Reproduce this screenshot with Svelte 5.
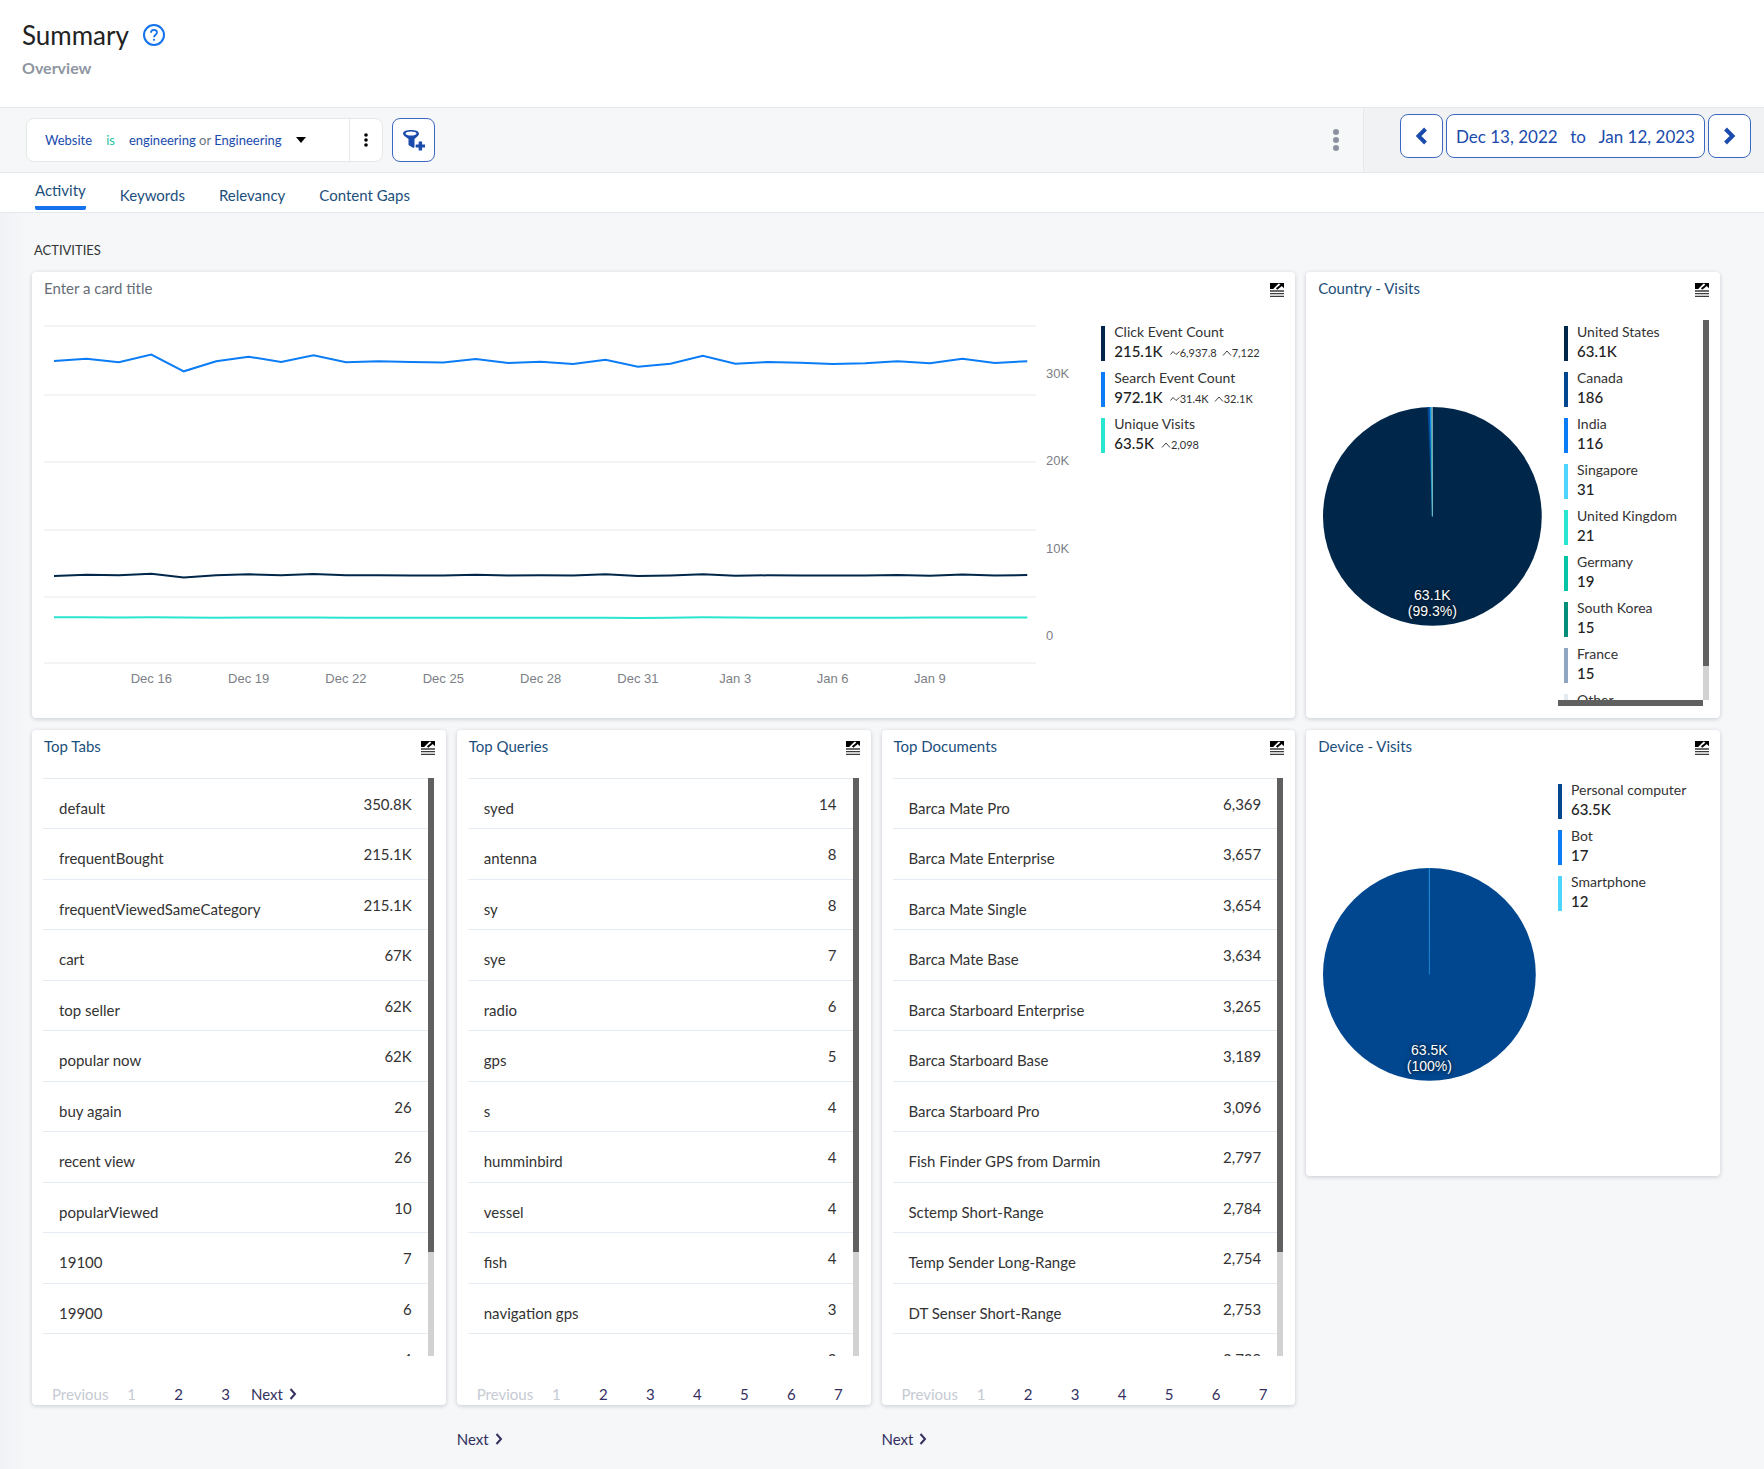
<script lang="ts">
	type LegendItem = { label: string; value: string; color: string; count: number; avg?: string; peak?: string };
	type ListCard = { title: string; rows: [string, string][]; pages: number[]; nextInside: boolean };

	const tabs = ['Activity', 'Keywords', 'Relevancy', 'Content Gaps'];
	let activeTab = $state('Activity');
	let cardTitle = $state('');

	const metrics: LegendItem[] = [
		{ label: 'Click Event Count', value: '215.1K', color: '#00274a', count: 0, avg: '6,937.8', peak: '7,122' },
		{ label: 'Search Event Count', value: '972.1K', color: '#0a7cf5', count: 0, avg: '31.4K', peak: '32.1K' },
		{ label: 'Unique Visits', value: '63.5K', color: '#28e6cf', count: 0, peak: '2,098' }
	];

	const countries: LegendItem[] = [
		{ label: 'United States', value: '63.1K', color: '#00274a', count: 63100 },
		{ label: 'Canada', value: '186', color: '#00478f', count: 186 },
		{ label: 'India', value: '116', color: '#0a7cf5', count: 116 },
		{ label: 'Singapore', value: '31', color: '#4dd5ff', count: 31 },
		{ label: 'United Kingdom', value: '21', color: '#28e6cf', count: 21 },
		{ label: 'Germany', value: '19', color: '#05c3a5', count: 19 },
		{ label: 'South Korea', value: '15', color: '#028e79', count: 15 },
		{ label: 'France', value: '15', color: '#90a5c2', count: 15 },
		{ label: 'Other', value: '42', color: '#e2e9ef', count: 42 }
	];

	const devices: LegendItem[] = [
		{ label: 'Personal computer', value: '63.5K', color: '#00478f', count: 63500 },
		{ label: 'Bot', value: '17', color: '#0a7cf5', count: 17 },
		{ label: 'Smartphone', value: '12', color: '#4dd5ff', count: 12 }
	];

	const lists: ListCard[] = [
		{
			title: 'Top Tabs',
			rows: [
				['default', '350.8K'],
				['frequentBought', '215.1K'],
				['frequentViewedSameCategory', '215.1K'],
				['cart', '67K'],
				['top seller', '62K'],
				['popular now', '62K'],
				['buy again', '26'],
				['recent view', '26'],
				['popularViewed', '10'],
				['19100', '7'],
				['19900', '6'],
				['', '4']
			],
			pages: [2, 3],
			nextInside: true
		},
		{
			title: 'Top Queries',
			rows: [
				['syed', '14'],
				['antenna', '8'],
				['sy', '8'],
				['sye', '7'],
				['radio', '6'],
				['gps', '5'],
				['s', '4'],
				['humminbird', '4'],
				['vessel', '4'],
				['fish', '4'],
				['navigation gps', '3'],
				['', '3']
			],
			pages: [2, 3, 4, 5, 6, 7],
			nextInside: false
		},
		{
			title: 'Top Documents',
			rows: [
				['Barca Mate Pro', '6,369'],
				['Barca Mate Enterprise', '3,657'],
				['Barca Mate Single', '3,654'],
				['Barca Mate Base', '3,634'],
				['Barca Starboard Enterprise', '3,265'],
				['Barca Starboard Base', '3,189'],
				['Barca Starboard Pro', '3,096'],
				['Fish Finder GPS from Darmin', '2,797'],
				['Sctemp Short-Range', '2,784'],
				['Temp Sender Long-Range', '2,754'],
				['DT Senser Short-Range', '2,753'],
				['', '2,739']
			],
			pages: [2, 3, 4, 5, 6, 7],
			nextInside: false
		}
	];

	// Daily values, Dec 13 to Jan 12
	const search = [
		31500, 31760, 31350, 32230, 30320, 31470, 31990, 31390, 32150, 31350, 31470, 31390, 31320, 31730, 31270, 31420,
		31160, 31650, 30850, 31190, 32110, 31190, 31390, 31310, 31160, 31240, 31470, 31240, 31760, 31270, 31470
	];
	const clicks = [
		6870, 7020, 6950, 7130, 6690, 6970, 7060, 6950, 7090, 6950, 6970, 6940, 6930, 7020, 6940, 6950, 6930, 7060, 6870,
		6930, 7060, 6910, 6950, 6940, 6920, 6940, 7000, 6910, 7050, 6940, 6980
	];
	const visits = [
		2140, 2140, 2130, 2140, 2110, 2090, 2130, 2110, 2130, 2100, 2100, 2090, 2090, 2100, 2090, 2090, 2090, 2100, 2070,
		2090, 2140, 2110, 2100, 2100, 2090, 2080, 2100, 2110, 2120, 2110, 2110
	];

	const PLOT_W = 993;
	const PLOT_H = 371;
	const ZERO_Y = 316;
	const series = [
		{ color: '#28e6cf', values: visits },
		{ color: '#00274a', values: clicks },
		{ color: '#0a7cf5', values: search }
	];
	const gridLines = [6, 75, 142, 210, 277, 343];
	const dayLabels = ['Dec 16', 'Dec 19', 'Dec 22', 'Dec 25', 'Dec 28', 'Dec 31', 'Jan 3', 'Jan 6', 'Jan 9'];
	const yTicks = [
		{ label: '30K', value: 30000 },
		{ label: '20K', value: 20000 },
		{ label: '10K', value: 10000 },
		{ label: '0', value: 0 }
	];

	const dayX = (i: number) => 10 + (i * (PLOT_W - 19)) / 30;
	const valueY = (v: number) => ZERO_Y - v * 0.00873;
	const toPoints = (values: number[]) => values.map((v, i) => `${dayX(i)},${valueY(v)}`).join(' ');

	function slices(items: LegendItem[], r: number) {
		const total = items.reduce((sum, item) => sum + item.count, 0);
		let angle = (items[0].count / total) * Math.PI * 2;
		return items.slice(1).map((item) => {
			const start = angle;
			angle += (item.count / total) * Math.PI * 2;
			const point = (a: number) => `${r + r * Math.sin(a)},${r - r * Math.cos(a)}`;
			return { color: item.color, d: `M${r},${r} L${point(start)} A${r},${r} 0 0 1 ${point(angle)} Z` };
		});
	}
</script>

{#snippet expandButton(name: string)}
	<button class="icon-btn" aria-label="Explore {name}">
		<svg width="14" height="14" viewBox="0 0 14 14">
			<path d="M0 0h9v6H0z" fill="#000" />
			<path d="M4.800 7.200 11 1" stroke="#fff" stroke-width="4" />
			<path d="M6.600 6 11.500 2" stroke="#000" stroke-width="2" />
			<path d="M8.500 0H14v5.200z" fill="#000" />
			<path d="M0 8h14M0 10.700h14M0 13.400h14" stroke="#3c3c3c" stroke-width="1.300" />
		</svg>
	</button>
{/snippet}

{#snippet legend(items: LegendItem[])}
	<ul class="legend">
		{#each items as item}
			<li style:border-color={item.color}>
				<span class="legend-label">{item.label}</span>
				<span class="legend-line">
					<span class="legend-value">{item.value}</span>
					{#if item.avg}
						<span class="stat">
							<svg width="10" height="6" viewBox="0 0 10 6"><path d="M0.500 4.500 3 1.500 6 4.500 9.500 1.500" /></svg>{item.avg}
						</span>
					{/if}
					{#if item.peak}
						<span class="stat">
							<svg width="10" height="6" viewBox="0 0 10 6"><path d="M1 5.500 5 1 9 5.500" /></svg>{item.peak}
						</span>
					{/if}
				</span>
			</li>
		{/each}
	</ul>
{/snippet}

{#snippet pie(items: LegendItem[], r: number, value: string, percent: string)}
	<svg class="pie" viewBox="0 0 {r * 2} {r * 2}">
		<circle cx={r} cy={r} {r} fill={items[0].color} />
		{#each slices(items, r) as slice}
			<path d={slice.d} fill={slice.color} stroke={slice.color} stroke-width="0.200" />
		{/each}
		<text x={r} y={r * 2 - 26}>{value}</text>
		<text x={r} y={r * 2 - 10}>{percent}</text>
	</svg>
{/snippet}

{#snippet nextButton()}
	<button class="next">
		Next
		<svg width="8" height="12" viewBox="0 0 8 12"><path d="M1.500 1 6 6 1.500 11" /></svg>
	</button>
{/snippet}

<div class="page">
	<header class="page-header">
		<div class="title-row">
			<h1>Summary</h1>
			<button class="icon-btn" aria-label="Help">
				<svg width="22" height="22" viewBox="0 0 22 22" fill="none" stroke="#1372ec" stroke-width="2">
					<circle cx="11" cy="11" r="10" />
					<path d="M8 8.800C8 6.800 9.300 5.800 11 5.800s3 1.100 3 2.700c0 2.200-3 2.300-3 4.700" stroke-width="1.800" />
					<circle cx="11" cy="15.800" r="1.100" fill="#1372ec" stroke="none" />
				</svg>
			</button>
		</div>
		<p>Overview</p>
	</header>

	<div class="toolbar">
		<div class="filter">
			<button class="filter-main">
				<span>Website</span>
				<span class="operator">is</span>
				<span>engineering <i>or</i> Engineering</span>
				<svg width="10" height="6" viewBox="0 0 10 6"><path d="M0 0h10L5 6z" /></svg>
			</button>
			<button class="filter-menu" aria-label="Filter options">
				<svg width="4" height="14" viewBox="0 0 4 14">
					<circle cx="2" cy="2" r="1.800" /><circle cx="2" cy="7" r="1.800" /><circle cx="2" cy="12" r="1.800" />
				</svg>
			</button>
		</div>
		<button class="outlined square" aria-label="Add filter">
			<svg width="22" height="22" viewBox="0 0 22 22" fill="#1a4bad">
				<path d="M0 4.500C0 2 4 1 8 1s8 1 8 3.500c0 1.500-1.500 3-4.500 5.500v7.500c0 1.500-1 1.500-2 1L5.500 16v-6C2 7.500 0 6 0 4.500z" />
				<ellipse cx="8" cy="4.500" rx="5.500" ry="2" fill="#fff" />
				<path d="M15.700 12.500h3.400v3h3v3h-3v3h-3.400v-3h-3v-3h3z" />
			</svg>
		</button>
		<button class="icon-btn more" aria-label="More actions">
			<svg width="6" height="22" viewBox="0 0 6 22" fill="#8a929e">
				<circle cx="3" cy="3" r="3" /><circle cx="3" cy="11" r="3" /><circle cx="3" cy="19" r="3" />
			</svg>
		</button>
		<div class="period">
			<button class="outlined square" aria-label="Previous period">
				<svg width="12" height="18" viewBox="0 0 12 18" fill="none" stroke="#1a4bad" stroke-width="4">
					<path d="M9.500 2l-7 7 7 7" />
				</svg>
			</button>
			<button class="outlined range"><span>Dec 13, 2022</span><span>to</span><span>Jan 12, 2023</span></button>
			<button class="outlined square" aria-label="Next period">
				<svg width="12" height="18" viewBox="0 0 12 18" fill="none" stroke="#1a4bad" stroke-width="4">
					<path d="M1.500 2l7 7-7 7" />
				</svg>
			</button>
		</div>
	</div>

	<nav class="tabs">
		{#each tabs as tab}
			<button class:active={activeTab === tab} onclick={() => (activeTab = tab)}>{tab}</button>
		{/each}
	</nav>

	<main>
		<h2>ACTIVITIES</h2>
		<div class="grid">
			<section class="card wide">
				<div class="card-header">
					<input type="text" placeholder="Enter a card title" aria-label="Card title" bind:value={cardTitle} />
					{@render expandButton('chart')}
				</div>
				<div class="chart-body">
					<svg class="plot" height={PLOT_H}>
						<svg width="100%" height={PLOT_H} viewBox="0 0 {PLOT_W} {PLOT_H}" preserveAspectRatio="none">
							{#each gridLines as y}
								<line class="grid-line" x1="0" x2={PLOT_W} y1={y} y2={y} />
							{/each}
							{#each series as line}
								<polyline points={toPoints(line.values)} stroke={line.color} />
							{/each}
						</svg>
						{#each dayLabels as day, i}
							<text x="{(dayX(3 + i * 3) / PLOT_W) * 100}%" y="363" text-anchor="middle">{day}</text>
						{/each}
					</svg>
					<svg class="y-axis" width="44" height={PLOT_H}>
						{#each yTicks as tick}
							<text x="0" y={valueY(tick.value) + 4}>{tick.label}</text>
						{/each}
					</svg>
					<div class="chart-legend">{@render legend(metrics)}</div>
				</div>
			</section>

			<section class="card">
				<div class="card-header">
					<h3>Country - Visits</h3>
					{@render expandButton('Country - Visits')}
				</div>
				<div class="pie-body">
					<div class="pie-area">{@render pie(countries, 109, '63.1K', '(99.3%)')}</div>
					<div class="scroller">
						<div class="scroll-view">{@render legend(countries)}</div>
						<div class="track"><div class="thumb" style:height="91%"></div></div>
						<div class="thumb-x"></div>
					</div>
				</div>
			</section>

			{#each lists as list}
				<div class="list-col">
					<section class="card">
						<div class="card-header">
							<h3>{list.title}</h3>
							{@render expandButton(list.title)}
						</div>
						<div class="list-body">
							<div class="list-view">
								<table>
									<tbody>
										{#each list.rows as [name, value]}
											<tr>
												<th scope="row">{name}</th>
												<td>{value}</td>
											</tr>
										{/each}
									</tbody>
								</table>
							</div>
							<div class="track"><div class="thumb" style:height="82%"></div></div>
						</div>
						<div class="pager">
							<button class="prev" disabled>Previous</button>
							<button class="num" disabled>1</button>
							{#each list.pages as page}
								<button class="num">{page}</button>
							{/each}
							{#if list.nextInside}{@render nextButton()}{/if}
						</div>
					</section>
					{#if !list.nextInside}{@render nextButton()}{/if}
				</div>
			{/each}

			<section class="card device">
				<div class="card-header">
					<h3>Device - Visits</h3>
					{@render expandButton('Device - Visits')}
				</div>
				<div class="pie-body">
					<div class="pie-area">{@render pie(devices, 106, '63.5K', '(100%)')}</div>
					<div class="device-legend">{@render legend(devices)}</div>
				</div>
			</section>
		</div>
	</main>
</div>

<style>
	:global(body) {
		background: #f5f7f9;
	}

	.page {
		font-family: Lato, 'Open Sans', sans-serif;
		color: #333;
		min-height: 100vh;
	}

	button {
		font: inherit;
		color: inherit;
		background: none;
		border: none;
		padding: 0;
		cursor: pointer;
	}

	button svg {
		display: block;
	}

	h1,
	h2,
	h3,
	p,
	ul {
		margin: 0;
		padding: 0;
		font-weight: 400;
	}

	.page-header {
		background: #fff;
		border-bottom: 1px solid #e5e8ec;
		padding: 19px 22px 29px;
	}

	.title-row {
		display: flex;
		align-items: center;
		gap: 14px;
	}

	h1 {
		font-size: 26px;
		line-height: 32px;
		color: #222;
	}

	.page-header p {
		font-size: 16px;
		font-weight: 700;
		line-height: 20px;
		margin-top: 7px;
		color: #8f96a1;
	}

	.toolbar {
		display: flex;
		align-items: stretch;
		height: 64px;
		border-bottom: 1px solid #e5e8ec;
		padding-left: 26px;
	}

	.filter {
		display: flex;
		width: 355px;
		height: 42px;
		margin: 10px 9px 0 0;
		background: #fff;
		border: 1px solid #e5e8e8;
		border-radius: 8px;
		font-size: 13px;
		color: #1a4bad;
	}

	.filter-main {
		flex: 1;
		display: flex;
		align-items: center;
		gap: 14px;
		padding-left: 18px;
	}

	.filter-main i {
		font-style: normal;
		color: #6b7480;
	}

	.filter-main .operator {
		color: #1cc4a4;
	}

	.filter-menu {
		width: 33px;
		display: flex;
		align-items: center;
		justify-content: center;
		border-left: 1px solid #e5e8e8;
	}

	.filter-main svg,
	.filter-menu svg {
		fill: #000;
	}

	.outlined {
		display: flex;
		align-items: center;
		justify-content: center;
		box-sizing: border-box;
		height: 44px;
		background: #fff;
		border: 1px solid #3b68c0;
		border-radius: 8px;
		color: #1a4bad;
	}

	.square {
		width: 43px;
	}

	.toolbar > .outlined {
		margin-top: 10px;
	}

	.icon-btn {
		display: flex;
		align-items: center;
	}

	.more {
		margin-left: auto;
		padding: 0 24px;
	}

	.period {
		display: flex;
		gap: 3px;
		background: #f1f2f4;
		border-left: 1px solid #e5e8ec;
		padding: 6px 13px 0 36px;
	}

	.range {
		width: 259px;
		justify-content: space-between;
		padding: 0 9px;
		font-size: 17px;
	}

	.tabs {
		display: flex;
		gap: 34px;
		height: 39px;
		padding-left: 35px;
		background: #fff;
		border-bottom: 1px solid #e5e8ec;
		font-size: 15px;
		color: #1c4f7c;
	}

	.tabs button {
		height: 37px;
		padding-top: 11px;
		line-height: 20px;
		box-sizing: border-box;
		border-bottom: 4px solid transparent;
	}

	.tabs .active {
		padding-top: 0;
		border-color: #1372ec;
		border-radius: 2px;
	}

	main {
		padding: 28px 44px 24px 32px;
		background: linear-gradient(90deg, #f1f2f5, #f5f7f9 28px);
	}

	h2 {
		font-size: 13px;
		line-height: 18px;
		padding-left: 2px;
		margin-bottom: 13px;
	}

	.grid {
		display: grid;
		grid-template-columns: repeat(4, minmax(0, 1fr));
		align-items: start;
		gap: 12px 11px;
	}

	.card {
		background: #fff;
		border-radius: 4px;
		box-shadow: 0 1px 4px rgba(40, 50, 70, 0.22);
	}

	.wide {
		grid-column: span 3;
	}

	.card-header {
		display: flex;
		justify-content: space-between;
		height: 42px;
		padding: 6px 11px 0 12px;
	}

	.card-header h3,
	.card-header input {
		font-family: inherit;
		font-size: 15px;
		line-height: 20px;
		height: 20px;
		color: #1c4f7c;
	}

	.card-header input {
		border: none;
		padding: 0;
		outline: none;
		background: none;
	}

	.card-header input::placeholder {
		color: #666d76;
		opacity: 1;
	}

	.card-header .icon-btn {
		height: 24px;
	}

	.chart-body {
		display: flex;
		height: 398px;
		padding: 0 12px;
	}

	.plot {
		flex: 1;
		min-width: 0;
	}

	.plot text,
	.y-axis text {
		font: 13px 'Liberation Sans', Arial, sans-serif;
		fill: #7c8086;
	}

	.grid-line {
		stroke: #f4f4f5;
		stroke-width: 2;
		vector-effect: non-scaling-stroke;
	}

	polyline {
		fill: none;
		stroke-width: 2;
		vector-effect: non-scaling-stroke;
	}

	.y-axis {
		margin-left: 10px;
	}

	.chart-legend {
		width: 182px;
		margin-left: 11px;
		padding-top: 6px;
	}

	.legend {
		display: flex;
		flex-direction: column;
		gap: 11px;
		list-style: none;
	}

	.legend li {
		height: 35px;
		padding-left: 9px;
		border-left: 4px solid;
		white-space: nowrap;
	}

	.legend-label {
		display: block;
		font-size: 14px;
		line-height: 12px;
	}

	.legend-line {
		display: flex;
		align-items: baseline;
		gap: 5px;
		line-height: 27px;
	}

	.legend-value {
		font-size: 15px;
		font-weight: 500;
		color: #222;
		margin-right: 2px;
	}

	.stat {
		font-size: 11px;
	}

	.stat svg {
		fill: none;
		stroke: #444;
		margin-bottom: 1px;
	}

	.pie-body {
		display: flex;
		height: 386px;
		padding: 0 11px 12px 12px;
	}

	.pie-area {
		flex: 1;
		display: flex;
		align-items: center;
		padding: 7px 16px 0 5px;
	}

	.pie {
		width: 100%;
	}

	.pie text {
		font: 14px 'Liberation Sans', Arial, sans-serif;
		fill: #fff;
		text-anchor: middle;
		text-shadow: 0 0 4px #000;
	}

	.scroller {
		width: 151px;
		display: grid;
		grid-template-columns: 1fr 6px;
		grid-template-rows: 1fr 6px;
	}

	.scroll-view {
		overflow: hidden;
		height: 380px;
		padding: 6px 0 0 6px;
		box-sizing: border-box;
	}

	.track {
		width: 6px;
		background: #d2d2d2;
	}

	.thumb,
	.thumb-x {
		background: #606060;
	}

	.device .pie-area {
		padding-right: 22px;
	}

	.device-legend {
		width: 151px;
		padding-top: 6px;
	}

	.list-body {
		display: flex;
		height: 578px;
		padding: 0 12px 0 11px;
	}

	.list-view {
		flex: 1;
		overflow: hidden;
	}

	table {
		width: 100%;
		border-collapse: collapse;
		font-size: 15px;
		line-height: 20px;
	}

	tr {
		height: 50px;
	}

	tr:nth-child(even) {
		height: 51px;
	}

	th,
	td {
		vertical-align: top;
		border-top: 1px solid #e5ecf3;
	}

	th {
		padding: 19px 0 0 16px;
		text-align: left;
		font-weight: 400;
	}

	td {
		padding: 15px 16px 0 0;
		text-align: right;
	}

	.pager {
		display: flex;
		align-items: baseline;
		padding: 28px 0 0 20px;
		font-size: 15px;
		line-height: 21px;
		color: #34305f;
	}

	.prev,
	.num:disabled {
		color: #c6cad3;
	}

	.prev {
		width: 56px;
		text-align: left;
	}

	.num {
		width: 47px;
	}

	.next {
		display: flex;
		align-items: center;
		gap: 6px;
		font-size: 15px;
		line-height: 20px;
		color: #34305f;
	}

	.next svg {
		fill: none;
		stroke: #34305f;
		stroke-width: 2;
	}

	.pager .next {
		margin-left: 2px;
	}

	.card + .next {
		margin-top: 24px;
	}
</style>
